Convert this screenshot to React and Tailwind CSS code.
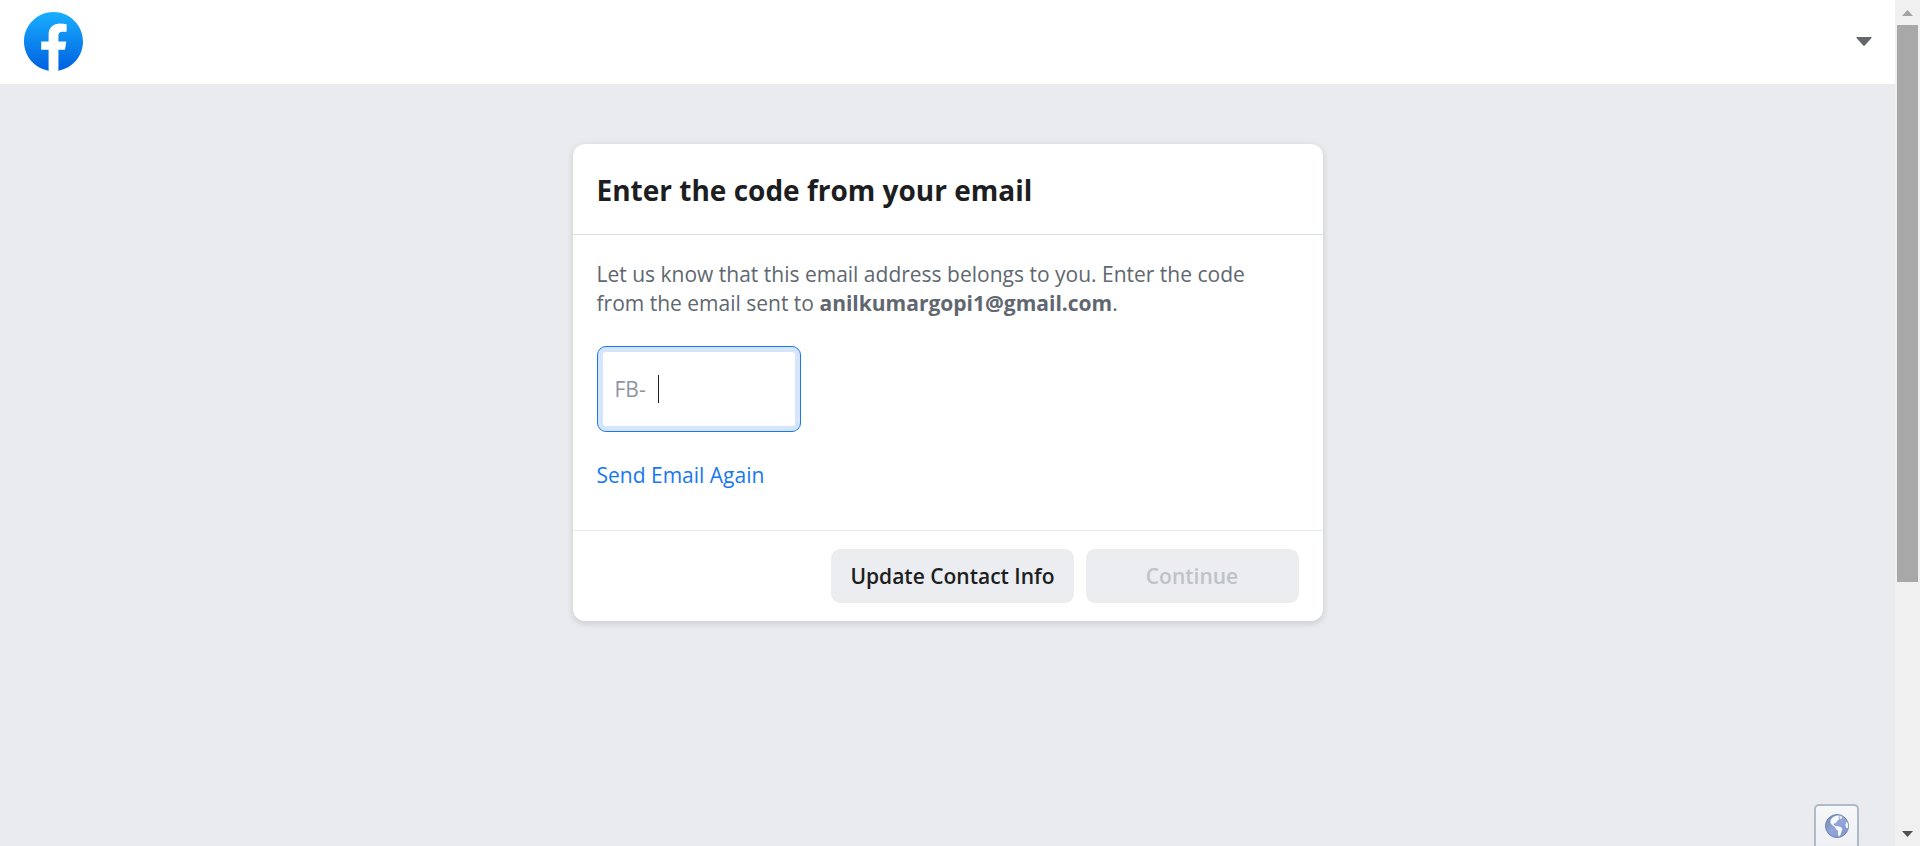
function FacebookLogo() {
  return (
    <svg className="size-[59px]" viewBox="0 0 36 36" aria-hidden="true">
      <defs>
        <linearGradient id="logo-fill" x1="50%" x2="50%" y1="97%" y2="0%">
          <stop offset="0%" stopColor="#0062E0" />
          <stop offset="100%" stopColor="#19AFFF" />
        </linearGradient>
      </defs>
      <path
        fill="url(#logo-fill)"
        d="M15 35.8C6.5 34.3 0 26.9 0 18 0 8.1 8.1 0 18 0s18 8.1 18 18c0 8.9-6.5 16.3-15 17.8l-1-.8h-4l-1 .8z"
      />
      <path
        fill="#fff"
        d="M25 23l.8-5H21v-3.500c0-1.400.5-2.500 2.700-2.500H26V7.400c-1.300-.2-2.700-.4-4-.4-4.100 0-7 2.500-7 7v4h-4.500v5H15v12.700c1 .2 2 .3 3 .3s2-.1 3-.3V23h4z"
      />
    </svg>
  );
}

function Globe() {
  return (
    <svg className="size-6" viewBox="0 0 24 24" aria-hidden="true">
      <defs>
        <linearGradient id="globe-fill" x1="0" x2="1" y1="0" y2="1">
          <stop offset="0" stopColor="#7088b4" />
          <stop offset="0.5" stopColor="#94a6d8" />
          <stop offset="1" stopColor="#7f92ca" />
        </linearGradient>
      </defs>
      <circle cx="12" cy="12" r="11.5" fill="url(#globe-fill)" stroke="#7284ae" />
      <path
        fill="#f7f9fc"
        d="M5.500 6L8 3l4-1.500 2.500.3-1 1.700 1 1.500-2 1.500-1.500 2.500-2 .5-.5 1.500 1.500.5 1.500 1.500-2-.3L7 11 5.500 9z"
      />
      <path fill="#dfe6f3" d="M14.500 1.500l2.500.8.5 1.700-2 1.500-1-1.500z" />
      <path fill="#f7f9fc" d="M10 12.800l2.500-.8 3.500 1.300 1.500 1.700-1 2.500-.8 3-1.700 2-1-1.500v-4l-2.500-2.500z" />
      <path fill="#f7f9fc" d="M21.200 8l1.300.5.8 3.500-.7 2.500-1.600-1-.6-2.500z" />
    </svg>
  );
}

function ScrollRail() {
  return (
    <div className="flex w-[25px] shrink-0 flex-col items-center bg-[#f0f0f0]" aria-hidden="true">
      <div className="flex h-[25px] shrink-0 items-center">
        <svg className="h-[6px] w-[11px]" viewBox="0 0 11 6">
          <path fill="#a3a3a3" d="M0 6L5.500 0 11 6z" />
        </svg>
      </div>
      <div className="flex w-[21px] grow flex-col">
        <div className="grow-[7] basis-0 bg-[#a8a8a8]" />
        <div className="grow-[3] basis-0" />
      </div>
      <div className="flex h-[25px] shrink-0 items-center">
        <svg className="h-[6px] w-[11px]" viewBox="0 0 11 6">
          <path fill="#505050" d="M0 0h11L5.500 6z" />
        </svg>
      </div>
    </div>
  );
}

export default function App() {
  return (
    <div className="flex min-h-screen bg-[#e9ebee] font-['Open_Sans',sans-serif]">
      <div className="relative flex min-w-0 grow flex-col">
        <header className="flex h-[84px] items-center justify-between bg-white pr-[23px] pb-px pl-6">
          <a href="#" aria-label="Facebook">
            <FacebookLogo />
          </a>
          <button type="button" aria-label="Account menu">
            <svg className="h-[9px] w-4" viewBox="0 0 16 9" aria-hidden="true">
              <path fill="#65676b" d="M1 0h14q1 .4.500 1L8.800 8.500q-.8.800-1.600 0L.5 1Q0 .4 1 0z" />
            </svg>
          </button>
        </header>

        <main className="flex grow justify-center pt-[60px]">
          <form className="w-full max-w-[750px] self-start rounded-xl bg-white shadow-[0_3px_6px_rgba(0,0,0,0.1),0_0_10px_rgba(0,0,0,0.05)]">
            <div className="border-b border-[#dddfe2] px-6 pt-7 pb-[26px]">
              <h1 className="text-[28px] leading-9 font-bold text-[#1c1e21]">Enter the code from your email</h1>
            </div>
            <div className="px-6 pt-[25px] pb-10">
              <p className="max-w-[680px] text-[21px] leading-[29px] text-[#606770]">
                Let us know that this email address belongs to you. Enter the code from the email sent to{' '}
                <strong className="font-bold">anilkumargopi1@gmail.com</strong>.
              </p>
              <div className="mt-7 flex h-[86px] w-[204px] items-center rounded-[9px] border border-[#1877f2] px-[17px] text-[21px] leading-[29px] shadow-[inset_0_0_0_5px_#d5e5fb]">
                <label htmlFor="code" className="text-[#8d949e]">
                  FB-
                </label>
                <span className="ml-3 h-7 w-px shrink-0 bg-[#1c1e21]" />
                <input
                  id="code"
                  type="text"
                  maxLength={8}
                  className="min-w-0 grow bg-transparent caret-transparent outline-none"
                />
              </div>
              <a href="#" className="mt-[29px] block w-fit text-[21px] leading-[29px] text-[#1877f2]">
                Send Email Again
              </a>
            </div>
            <div className="flex justify-end gap-3 border-t border-[#e9eaec] px-6 py-[18px]">
              <button
                type="button"
                className="h-[54px] rounded-[9px] bg-[#ebedf0] px-[19px] text-[21px] leading-[29px] font-semibold text-[#1c1e21]"
              >
                Update Contact Info
              </button>
              <button
                type="submit"
                disabled
                className="h-[54px] w-[213px] rounded-[9px] bg-[#ebedf0] text-[21px] leading-[29px] font-semibold text-[#bec3c9]"
              >
                Continue
              </button>
            </div>
          </form>
        </main>

        <button
          type="button"
          aria-label="Language"
          className="absolute right-9 bottom-0 flex h-[42px] w-[45px] items-start justify-center rounded-t-[5px] border-2 border-b-0 border-[#b0b9c8] bg-linear-to-b from-[#f6f7f9] to-[#eff0f3] pt-2"
        >
          <Globe />
        </button>
      </div>
      <ScrollRail />
    </div>
  );
}
